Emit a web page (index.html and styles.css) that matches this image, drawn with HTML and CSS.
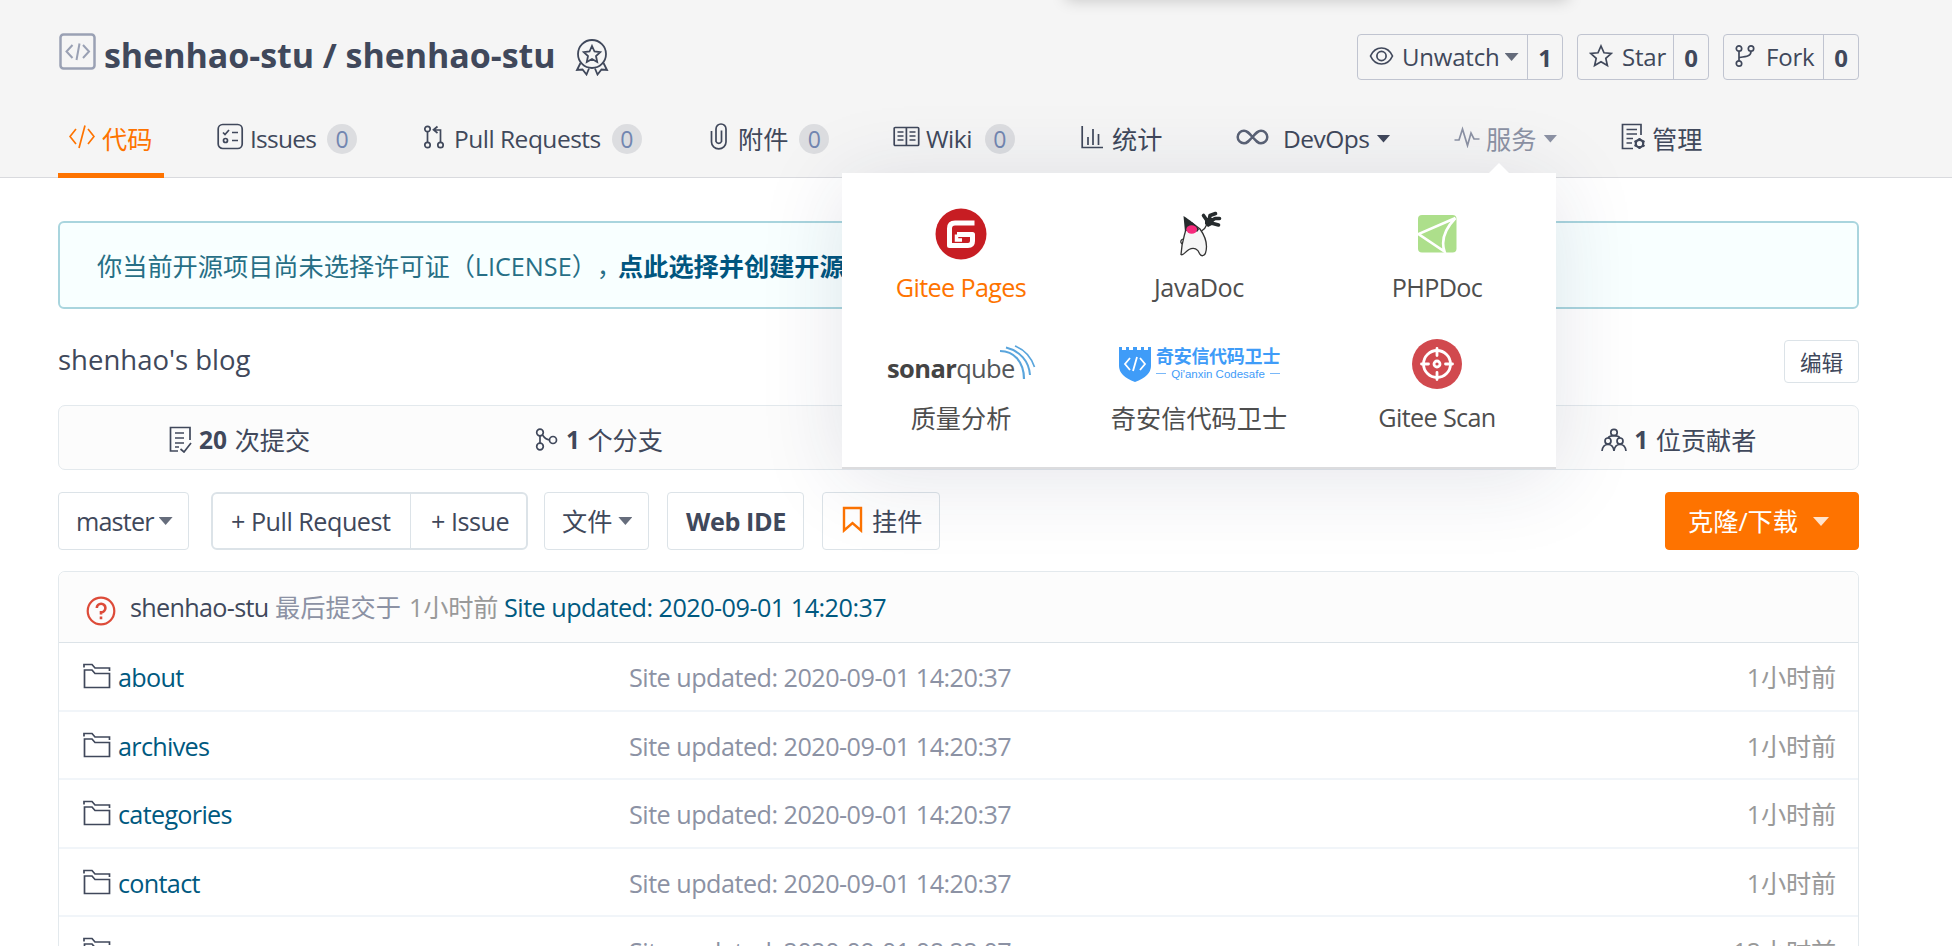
FILE: index.html
```html
<!DOCTYPE html>
<html lang="zh-CN">
<head>
<meta charset="utf-8">
<title>shenhao-stu/shenhao-stu</title>
<link rel="stylesheet" href="styles.css">
</head>
<body>
<svg class="defs" width="0" height="0">
  <symbol id="folder" viewBox="0 0 28 26"><path d="M1 4.500V1.500H9L12 5H26.500V8M1.500 7H9L12 10.500H26.500V24.500H1.500Z"/></symbol>
</svg>

<header class="header">
  <div class="topglow"></div>
  <div class="titlebar">
    <svg class="ic repo-ic" width="38" height="40" viewBox="0 0 38 40"><rect x="1.500" y="2.500" width="34" height="34" rx="3" stroke-width="2.500"/><path stroke-width="2" d="M13.500 13L7.500 19.500L13.500 26M24 13L30 19.500L24 26M20.500 11.500L17.500 28"/></svg>
    <h1 class="title">shenhao-stu / shenhao-stu</h1>
    <svg class="ic medal-ic" width="34" height="38" viewBox="0 0 34 38"><circle cx="17" cy="16" r="14"/><path d="M17 8L19.500 13.500L25.200 14.100L21 18L22.200 24L17 21L11.800 24L13 18L8.800 14.100L14.500 13.500ZM5.500 25L2 32L7.500 31.500L11.500 36.500L14 30.500M28.500 25L32 32L26.500 31.500L22.500 36.500L20 30.500"/></svg>
    <div class="social">
      <div class="sbtn"><span class="s-main w-watch"><svg class="ic" width="25" height="20" viewBox="0 0 25 20"><path d="M1.500 10C4 4.500 8 2 12.500 2S21 4.500 23.500 10C21 15.500 17 18 12.500 18S4 15.500 1.500 10Z"/><circle cx="12.500" cy="10" r="4.600"/></svg><span>Unwatch</span><i class="caret dim"></i></span><b>1</b></div>
      <div class="sbtn"><span class="s-main w-star"><svg class="ic" width="24" height="24" viewBox="0 0 24 24"><path d="M12 2L15 8.800L22.300 9.500L16.800 14.400L18.400 21.600L12 17.800L5.600 21.600L7.200 14.400L1.700 9.500L9 8.800Z"/></svg><span>Star</span></span><b>0</b></div>
      <div class="sbtn"><span class="s-main w-fork"><svg class="ic" width="20" height="24" viewBox="0 0 20 24"><circle cx="4" cy="4.500" r="2.700"/><circle cx="16" cy="4.500" r="2.700"/><circle cx="4" cy="19.500" r="2.700"/><path d="M4 7.200V16.800M16 7.200C16 12 12 12.500 4.500 13.500"/></svg><span>Fork</span></span><b>0</b></div>
    </div>
  </div>
  <nav class="tabs">
    <a class="tab tab-code active"><svg class="ic" width="26" height="26" viewBox="0 0 26 26"><path d="M7 5L1 12.500L7 20M19 5L25 12.500L19 20M16 1.500L10 24"/></svg><span>代码</span></a>
    <a class="tab tab-issues"><svg class="ic" width="27" height="27" viewBox="0 0 27 27"><rect x="1.200" y="1.500" width="24" height="24" rx="4.500"/><path d="M6 9.500L8 11.500L12 7M15 9.500H21M15 17.500H21"/><circle cx="8.500" cy="17.500" r="2"/></svg><span class="lat">Issues</span><em>0</em></a>
    <a class="tab tab-pr"><svg class="ic" width="22" height="24" viewBox="0 0 22 24"><circle cx="4.500" cy="4" r="2.700"/><circle cx="4.500" cy="20" r="2.700"/><circle cx="17.500" cy="20" r="2.700"/><path d="M4.500 6.700V17.300M17.500 17.300V5H11M14.500 1.500L10.500 4.800L14.500 8"/></svg><span class="lat">Pull Requests</span><em>0</em></a>
    <a class="tab tab-att"><svg class="ic" width="18" height="27" viewBox="0 0 18 27"><path d="M1.500 8V19A7.200 6.800 0 0 0 16 19V6A4.800 4.800 0 0 0 6 6V18.500A3 3 0 0 0 11.500 18.500V7.500"/></svg><span>附件</span><em>0</em></a>
    <a class="tab tab-wiki"><svg class="ic" width="27" height="21" viewBox="0 0 27 21"><rect x="1.200" y="1.500" width="24.500" height="18" rx="1"/><path d="M13.400 2V19M4.500 6H10.500M4.500 10H10.500M4.500 14H10.500M16.500 6H22.500M16.500 10H22.500M16.500 14H22.500"/></svg><span class="lat">Wiki</span><em>0</em></a>
    <a class="tab tab-stat"><svg class="ic" width="23" height="24" viewBox="0 0 23 24"><path d="M1.200 1V22.500H22M7 12V20M12 4V20M17.500 9V20"/></svg><span>统计</span></a>
    <a class="tab tab-devops"><svg class="ic inf" width="33" height="16" viewBox="0 0 33 16"><path d="M16.500 8C13 4 11 1.700 8 1.700A6.200 6.200 0 0 0 8 14.300C11 14.300 13 12 16.500 8S22 1.700 25 1.700A6.200 6.200 0 0 1 25 14.300C22 14.300 20 12 16.500 8Z"/></svg><span class="lat">DevOps</span><i class="caret"></i></a>
    <a class="tab tab-svc"><svg class="ic" width="26" height="22" viewBox="0 0 26 22"><path d="M0.500 14H5L8.500 3L13.500 19.500L17 7L20 13H25.500"/></svg><span>服务</span><i class="caret"></i></a>
    <a class="tab tab-admin"><svg class="ic" width="25" height="28" viewBox="0 0 25 28"><path d="M20 12V1.500H1.500V25.500H12M5.500 6.500H16M5.500 11H16M5.500 15.500H12M5.500 20H11"/><circle cx="18.500" cy="20.500" r="3.700" stroke-width="2.200"/><path stroke-width="2.200" d="M18.500 15V17M18.500 24V26M13.500 18L15.300 19M21.700 22.200L23.500 23.200M13.500 23L15.300 22M21.700 19L23.500 18"/></svg><span>管理</span></a>
  </nav>

  <div class="menu">
    <div class="m-item hot"><div class="m-ic"><svg width="52" height="52" viewBox="0 0 52 52"><circle cx="26" cy="26" r="25.500" fill="#c71d23"/><path fill="none" stroke="#fff" stroke-width="5" stroke-linejoin="round" d="M39.500 15H20Q14.500 15 14.500 20.500V37.500H33Q37.500 37.500 37.500 33V26.500H22"/><path fill="none" stroke="#fff" stroke-width="3.500" d="M21.500 26.500V32H27"/></svg></div><span class="tight">Gitee Pages</span></div>
    <div class="m-item"><div class="m-ic"><svg class="duke" width="44" height="48" viewBox="0 0 44 48"><path d="M7.500 21C6 27 3.500 33 3 44.500C5 46 7 42 11 39.500C16 37 20 39 21.500 43.500C23 47 26.500 46 27.500 43C30 35 27 26 22 19L14 13Z" fill="#f6f6f6" stroke="#333" stroke-width="1.300"/><path d="M5.500 6C12 10 18 15 21 19.500L19 22C15 18 10 18 7 22Z" fill="#262b2d"/><ellipse cx="13.700" cy="19.500" rx="5.400" ry="4.200" fill="#f62a7c"/><path d="M23.500 21C25.500 20 27.500 18 28.500 15M5 29C2.500 30 2 32 4 34" fill="none" stroke="#333" stroke-width="1.300"/><path d="M27 8L35 8L36 14L30 17L27 14Z" fill="#262b2d"/><path d="M30 12L25.500 5.500M31 11L32 5.500L37.500 3.500M33 11L37 8.500L41.500 8.500M33 13L40.500 15" fill="none" stroke="#262b2d" stroke-width="3.600" stroke-linecap="round" stroke-linejoin="round"/></svg></div><span>JavaDoc</span></div>
    <div class="m-item"><div class="m-ic"><svg width="42" height="42" viewBox="0 0 42 42"><rect x="2" y="2" width="38.500" height="37.500" rx="4" fill="#addf8b"/><path d="M39.500 5L2.500 21L28.500 38.500Q23 22 39.500 5" fill="none" stroke="#fff" stroke-width="2.600"/></svg></div><span class="tight">PHPDoc</span></div>
    <div class="m-item"><div class="m-ic"><div class="sonar"><b>sonar</b><span>qube</span><svg width="37" height="36" viewBox="0 0 37 36" fill="none" stroke="#5aa5dc"><path stroke-width="2.200" d="M1 6C15 6 25 17 25 34"/><path stroke-width="2" d="M7 2.500C21 6 30 16 31 30"/><path stroke-width="1.700" d="M16 1C26 5 32 12 35.500 22"/></svg></div></div><span class="cjk">质量分析</span></div>
    <div class="m-item"><div class="m-ic"><div class="qax"><svg width="34" height="37" viewBox="0 0 34 37"><path fill="#3f9cf8" d="M1 1H4V4H8V1H11V4H15V1H19V4H23V1H26V4H30V1H33V20Q33 30 17 36Q1 30 1 20Z"/><path fill="none" stroke="#fff" stroke-width="1.800" d="M12 12L7 18L12 24M22 12L27 18L22 24M19 11L15 25"/></svg><div class="qax-t"><b>奇安信代码卫士</b><small><i></i>Qi'anxin Codesafe<i></i></small></div></div></div><span class="cjk">奇安信代码卫士</span></div>
    <div class="m-item"><div class="m-ic"><svg width="52" height="52" viewBox="0 0 52 52"><circle cx="26" cy="26" r="25" fill="#d1494e"/><g fill="none" stroke="#fff" stroke-width="2.800"><circle cx="26" cy="26" r="13.500"/><circle cx="26" cy="26" r="3"/><path stroke-linecap="round" d="M26 10.500V17.500M26 34.500V41.500M10.500 26H17.500M34.500 26H41.500"/></g></svg></div><span class="tight">Gitee Scan</span></div>
  </div>
</header>

<main class="page">
  <div class="notice"><span class="n-text">你当前开源项目尚未选择许可证（LICENSE），</span><a>点此选择并创建开源</a></div>
  <div class="desc"><span>shenhao's blog</span><button class="edit">编辑</button></div>
  <div class="stats">
    <div><svg class="ic" width="23" height="27" viewBox="0 0 23 27"><path d="M21 14V1.500H1.500V25H9M6 7H15M6 12H15M6 17H15M6 21H10M11.500 23L15 26L22 17"/></svg><b>20</b><span>次提交</span></div>
    <div><svg class="ic" width="23" height="23" viewBox="0 0 23 23"><circle cx="5" cy="4.500" r="3.300"/><circle cx="5" cy="18.500" r="3.300"/><circle cx="18" cy="12" r="3.500"/><path d="M5 8V15M7.500 7C9.500 10 11.500 11.500 14.500 12"/></svg><b>1</b><span>个分支</span></div>
    <div></div>
    <div></div>
    <div><svg class="ic" width="26" height="24" viewBox="0 0 26 24"><circle cx="13" cy="4.500" r="3.200"/><circle cx="7" cy="13" r="3"/><circle cx="19" cy="13" r="3"/><path d="M1 23C1.500 18.500 4 16.500 7 16.500S12.500 18.500 13 23C13.500 18.500 16 16.500 19 16.500S24.500 18.500 25 23M7 10C8 8.500 10 7.700 13 7.700S18 8.500 19 10"/></svg><b>1</b><span>位贡献者</span></div>
  </div>
  <div class="toolbar">
    <div class="btn b-master"><span>master</span><i class="caret dim"></i></div>
    <div class="group"><div class="g1">+ Pull Request</div><div class="g2">+ Issue</div></div>
    <div class="btn b-file"><span>文件</span><i class="caret dim"></i></div>
    <div class="btn b-ide"><b>Web IDE</b></div>
    <div class="btn b-widget"><svg width="21" height="27" viewBox="0 0 21 27"><path fill="none" stroke="#fe7300" stroke-width="2.400" d="M2 2H19V24.500L10.500 17L2 24.500Z"/></svg><span>挂件</span></div>
    <div class="clone"><span>克隆/下载</span><i class="caret"></i></div>
  </div>
  <section class="files">
    <div class="commit"><svg width="30" height="30" viewBox="0 0 30 30" fill="none" stroke="#dd4b39"><circle cx="15" cy="15" r="13.300" stroke-width="2.200"/><path stroke-width="2.600" d="M10.800 12A4.300 4.300 0 1 1 15 16.300V18.500M15 20.500V23.300"/></svg><span class="author">shenhao-stu</span><span class="last">最后提交于</span><span class="ago">1小时前</span><a class="msg">Site updated: 2020-09-01 14:20:37</a></div>
    <div class="row"><svg class="ic"><use href="#folder"/></svg><a>about</a><span class="msg">Site updated: 2020-09-01 14:20:37</span><span class="time">1小时前</span></div>
    <div class="row"><svg class="ic"><use href="#folder"/></svg><a>archives</a><span class="msg">Site updated: 2020-09-01 14:20:37</span><span class="time">1小时前</span></div>
    <div class="row"><svg class="ic"><use href="#folder"/></svg><a>categories</a><span class="msg">Site updated: 2020-09-01 14:20:37</span><span class="time">1小时前</span></div>
    <div class="row"><svg class="ic"><use href="#folder"/></svg><a>contact</a><span class="msg">Site updated: 2020-09-01 14:20:37</span><span class="time">1小时前</span></div>
    <div class="row"><svg class="ic"><use href="#folder"/></svg><a></a><span class="msg">Site updated: 2020-09-01 08:22:07</span><span class="time">12小时前</span></div>
  </section>
</main>
</body>
</html>
```
FILE: styles.css
```css
* { box-sizing: border-box; }
html, body { height: 946px; overflow: hidden; }
body { margin: 0; background: #fff; color: #40485b; font: 25.2px/36px "Open Sans", "Noto Sans CJK SC", sans-serif; white-space: nowrap; text-spacing-trim: space-all; }
.defs { position: absolute; }
.ic { fill: none; stroke: currentColor; stroke-width: 1.7; flex: none; }
i.caret { flex: none; width: 14px; height: 8px; background: currentColor; clip-path: polygon(0 0, 100% 0, 50% 100%); }
i.dim { opacity: .8; }

.header { position: relative; height: 178px; background: #f5f5f5; border-bottom: 1px solid #d9dade; }
.topglow { position: absolute; left: 1066px; top: -22px; width: 502px; height: 20px; box-shadow: 0 2px 16px rgba(0,0,0,.2); }
.titlebar { display: flex; align-items: flex-start; height: 106px; padding: 32px 93px 0 59px; }
.repo-ic { color: #9aa1b4; }
.title { margin: -1px 0 0 7px; width: 451px; font-size: 34px; line-height: 48px; font-weight: 700; letter-spacing: -.05px; }
.medal-ic { margin: 6px 0 0 20px; stroke-width: 1.800; }
.social { display: flex; gap: 14px; margin: 2px 0 0 auto; }
.sbtn { display: flex; height: 46px; border: 1px solid #c0c4d0; border-radius: 4px; line-height: 46px; letter-spacing: -.2px; }
.sbtn b { flex: 1; text-align: center; font-size: 24px; line-height: 45px; }
.sbtn:nth-child(1) { width: 206px; }
.sbtn:nth-child(2) { width: 132px; }
.sbtn:nth-child(3) { width: 136px; }
.s-main { display: flex; align-items: center; padding-left: 11px; border-right: 1px solid #c0c4d0; font-size: 24px; }
.s-main svg { margin-top: -2px; }
.w-watch { width: 170px; gap: 8px; }
.w-watch .caret { margin-left: -3px; }
.w-star { width: 96px; gap: 9px; }
.w-fork { width: 100px; gap: 11px; }

.tabs { position: relative; height: 72px; }
.tab { position: absolute; top: 0; height: 72px; display: flex; align-items: center; padding-bottom: 7px; }
.tab .lat { font-size: 24.5px; letter-spacing: -.5px; }
.tab em { width: 30px; height: 30px; border-radius: 15px; background: #dcdde0; color: #7286b0; font-style: normal; font-size: 23px; line-height: 30px; text-align: center; margin: 1px 0 0 11px; }
.tab svg { margin-right: 7px; margin-top: -4px; }
.tab-code { left: 58px; width: 106px; padding-left: 11px; }
.active { color: #fe7300; border-bottom: 5px solid #fe7300; padding-bottom: 2px; }
.tab-issues { left: 217px; }
.tab-issues svg { margin-right: 6px; }
.tab-issues .lat { letter-spacing: -.75px; }
.tab-pr { left: 423px; }
.tab-pr svg { margin-right: 9px; }
.tab-att { left: 710px; }
.tab-att svg { margin-right: 10px; }
.tab-wiki { left: 893px; }
.tab-wiki svg { margin-right: 6px; }
.tab-wiki em { margin-left: 13px; }
.tab-stat { left: 1081px; }
.tab-stat svg { margin-right: 8px; }
.tab-devops { left: 1236px; }
.tab .inf { margin-right: 14px; margin-top: -4px; stroke-width: 2.500; color: #5a6275; }
.tab-svc { left: 1454px; color: #8c92a4; }
.tab-svc svg { margin-right: 6px; }
.tab-admin { left: 1621px; }
.tab-admin svg { margin-right: 6px; }
.tab .caret { margin-left: 7px; }

.menu { position: absolute; z-index: 5; left: 842px; top: 173px; width: 714px; height: 296px; padding-top: 32px; background: #fff; border-bottom: 2px solid #dcdcde; box-shadow: 0 9px 80px rgba(32,44,80,.12); display: grid; grid-template-columns: repeat(3, 238px); grid-template-rows: 130px 130px; color: #4e4e4e; letter-spacing: -.4px; }
.menu::before { content: ""; position: absolute; left: 647px; top: -10px; width: 20px; height: 10px; background: #fff; clip-path: polygon(50% 0, 100% 100%, 0 100%); }
.m-item { display: flex; flex-direction: column; align-items: center; }
.m-ic { height: 58px; display: flex; align-items: center; margin-bottom: 6px; }
.m-item > span { line-height: 36px; }
.m-item > .tight { letter-spacing: -.65px; }
.m-item > .cjk { letter-spacing: 0; line-height: 38px; }
.hot { color: #fe7300; }
.duke { margin-left: 2px; }
.sonar { display: flex; align-items: flex-end; height: 42px; width: 148px; margin-top: -2px; color: #53565a; font-size: 25.500px; line-height: 32px; letter-spacing: -.7px; }
.sonar b { letter-spacing: -.6px; color: #444; }
.sonar svg { margin: 0 0 3px -16px; flex: none; }
.qax { display: flex; width: 162px; color: #3f9cf8; }
.qax-t { display: flex; flex-direction: column; width: 124px; margin-left: 4px; }
.qax-t b { font-size: 18px; line-height: 21px; letter-spacing: -.3px; }
.qax-t small { display: flex; align-items: center; justify-content: space-between; font: 11.500px/14px "Liberation Sans", sans-serif; letter-spacing: 0; }
.qax-t i { width: 10px; height: 1.500px; background: #7ab8f8; }

.page { width: 1801px; margin-left: 58px; }
.notice { margin-top: 43px; height: 88px; border: 2px solid #a9d5de; border-radius: 6px; background: #f8ffff; color: #276f86; padding-left: 37px; line-height: 87px; display: flex; }
.notice a { color: #00567f; font-weight: 700; margin-left: -4px; }
.desc { margin-top: 31px; height: 43px; display: flex; align-items: center; justify-content: space-between; font-size: 27.500px; }
.desc span { margin-top: -4px; }
.edit { width: 75px; height: 43px; border: 1px solid #dce3e8; border-radius: 4px; background: #fff; color: #40485b; font: 21.600px "Noto Sans CJK SC", sans-serif; padding: 0; }
.stats { margin-top: 22px; height: 65px; display: grid; grid-template-columns: repeat(5, 1fr); border: 1px solid #e3e9ed; border-radius: 7px; background: #fcfcfc; }
.stats div { display: flex; align-items: center; justify-content: center; gap: 7.500px; padding: 4px 0 0 1px; }
.stats b { font-size: 24.500px; }
.toolbar { margin-top: 22px; height: 58px; display: flex; }
.btn, .clone { display: flex; align-items: center; height: 58px; border: 1px solid #dce3e8; border-radius: 4px; }
.b-master { width: 131px; padding-left: 17px; gap: 5px; letter-spacing: -.85px; }
.group { margin-left: 22px; width: 317px; border: 2px solid #dce3e8; border-radius: 6px; display: flex; line-height: 55px; letter-spacing: -.5px; }
.g1 { width: 198px; padding-left: 18px; border-right: 1px solid #dce3e8; }
.g2 { padding-left: 20px; }
.b-file { margin-left: 16px; width: 105px; padding-left: 17px; gap: 6px; }
.b-ide { margin-left: 18px; width: 137px; padding-left: 18px; letter-spacing: -.4px; }
.b-widget { margin-left: 18px; width: 118px; padding-left: 19px; gap: 9px; }
.b-widget svg { margin-top: -4px; }
.clone { margin-left: auto; width: 194px; padding-left: 22px; gap: 15px; background: #fe7300; border-color: #fe7300; color: #fff; }
.clone .caret { opacity: .8; width: 16px; height: 9px; margin-top: 1px; }

.files { margin-top: 21px; border: 1px solid #e3e9ed; border-radius: 7px 7px 0 0; }
.commit { height: 71px; display: flex; align-items: center; background: #fcfcfc; border-bottom: 1px solid #dce3e8; padding-left: 27px; border-radius: 6px 6px 0 0; }
.commit svg { margin: 8px 14px 0 0; }
.author { width: 145px; letter-spacing: -.7px; }
.last { width: 134px; color: #8c92a4; }
.ago { width: 95px; color: #999; letter-spacing: -.2px; }
.commit .msg, .row a { color: #005980; }
.msg { letter-spacing: -.52px; }
.row { height: 68.500px; display: flex; align-items: center; padding: 2px 22px 0 24px; border-bottom: 2px solid #f1f5f9; }
.row svg { width: 28px; height: 26px; margin-right: 7px; margin-top: -2px; }
.row a { width: 511px; letter-spacing: -.7px; }
.row .msg { color: #8c92a4; }
.time { margin-left: auto; color: #999; letter-spacing: -.2px; }
```
